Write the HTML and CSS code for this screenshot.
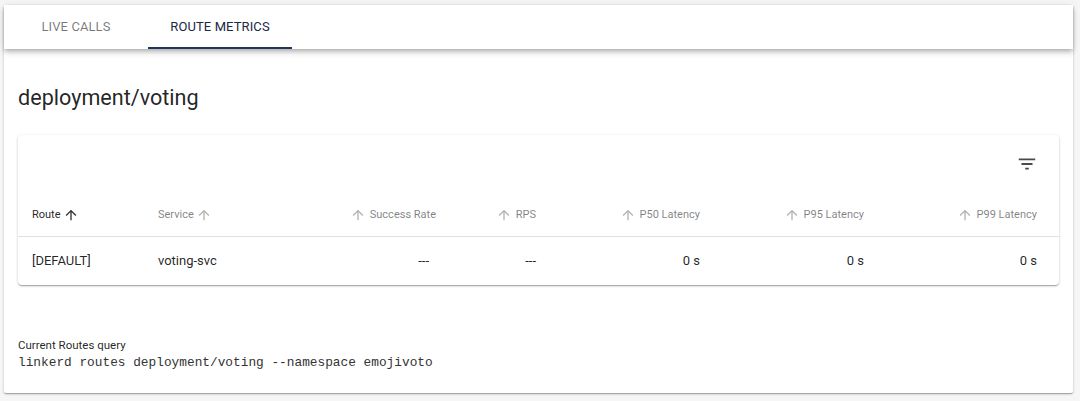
FILE: index.html
```html
<!DOCTYPE html>
<html>
<head>
<meta charset="utf-8">
<link rel="stylesheet" href="styles.css">
</head>
<body>
<div class="panel">
  <div class="tabbar">
    <div class="tab">LIVE CALLS</div>
    <div class="tab tab-active">ROUTE METRICS</div>
  </div>
  <div class="content">
    <h1 class="title">deployment/voting</h1>
    <div class="card">
      <div class="toolbar">
        <svg class="filter-icon" viewBox="0 0 24 24" width="22" height="22"><path d="M10 18h4v-2h-4v2zM3 6v2h18V6H3zm3 7h12v-2H6v2z"/></svg>
      </div>
      <div class="row head">
        <div class="cell c1 active">Route<svg class="arrow after" viewBox="0 0 24 24"><path d="M4 12l1.41 1.41L11 7.83V20h2V7.83l5.58 5.59L20 12l-8-8-8 8z"/></svg></div>
        <div class="cell c2">Service<svg class="arrow after" viewBox="0 0 24 24"><path d="M4 12l1.41 1.41L11 7.83V20h2V7.83l5.58 5.59L20 12l-8-8-8 8z"/></svg></div>
        <div class="cell num c3"><svg class="arrow before" viewBox="0 0 24 24"><path d="M4 12l1.41 1.41L11 7.83V20h2V7.83l5.58 5.59L20 12l-8-8-8 8z"/></svg>Success Rate</div>
        <div class="cell num c4"><svg class="arrow before" viewBox="0 0 24 24"><path d="M4 12l1.41 1.41L11 7.83V20h2V7.83l5.58 5.59L20 12l-8-8-8 8z"/></svg>RPS</div>
        <div class="cell num c5"><svg class="arrow before" viewBox="0 0 24 24"><path d="M4 12l1.41 1.41L11 7.83V20h2V7.83l5.58 5.59L20 12l-8-8-8 8z"/></svg>P50 Latency</div>
        <div class="cell num c6"><svg class="arrow before" viewBox="0 0 24 24"><path d="M4 12l1.41 1.41L11 7.83V20h2V7.83l5.58 5.59L20 12l-8-8-8 8z"/></svg>P95 Latency</div>
        <div class="cell num c7"><svg class="arrow before" viewBox="0 0 24 24"><path d="M4 12l1.41 1.41L11 7.83V20h2V7.83l5.58 5.59L20 12l-8-8-8 8z"/></svg>P99 Latency</div>
      </div>
      <div class="row body">
        <div class="cell c1">[DEFAULT]</div>
        <div class="cell c2">voting-svc</div>
        <div class="cell num c3 dash-sr">---</div>
        <div class="cell num c4">---</div>
        <div class="cell num c5">0 s</div>
        <div class="cell num c6">0 s</div>
        <div class="cell num c7">0 s</div>
      </div>
    </div>
    <div class="query-label">Current Routes query</div>
    <div class="query">linkerd routes deployment/voting --namespace emojivoto</div>
  </div>
</div>
</body>
</html>
```

FILE: styles.css
```css
* { box-sizing: border-box; }
html, body { margin: 0; padding: 0; }
body {
  background: #f6f6f6;
  font-family: Roboto, "Liberation Sans", sans-serif;
  color: rgba(0,0,0,0.87);
  width: 1080px;
  height: 401px;
  overflow: hidden;
}
.panel {
  margin: 5px 7px 0 4px;
  height: 388px;
  background: #fff;
  border-radius: 2px;
  box-shadow: 0 1px 3px rgba(0,0,0,0.2), 0 1px 1px rgba(0,0,0,0.14), 0 2px 1px -1px rgba(0,0,0,0.12);
  display: flex;
  flex-direction: column;
}
.tabbar {
  height: 44px;
  display: flex;
  background: #fff;
  box-shadow: 0 2px 4px -1px rgba(0,0,0,0.2), 0 4px 5px 0 rgba(0,0,0,0.14), 0 1px 10px 0 rgba(0,0,0,0.08);
  position: relative;
  z-index: 1;
}
.tab {
  width: 144px;
  display: flex;
  align-items: center;
  justify-content: center;
  font-size: 13px;
  font-weight: 400;
  letter-spacing: 0.1px;
  color: rgba(0,0,0,0.54);
  border-bottom: 2px solid transparent;
  padding-top: 1px;
}
.tab-active {
  color: #1b2747;
  border-bottom-color: #22345a;
}
.content {
  padding: 0 14px;
  display: flex;
  flex-direction: column;
}
.title {
  margin: 35px 0 0 0;
  font-size: 21.6px;
  font-weight: 400;
  line-height: 28px;
  color: rgba(0,0,0,0.87);
}
.card {
  margin-top: 23px;
  height: 150px;
  background: #fff;
  border-radius: 4px;
  box-shadow: 0 1px 3px rgba(0,0,0,0.2), 0 1px 1px rgba(0,0,0,0.14), 0 2px 1px -1px rgba(0,0,0,0.12);
}
.toolbar {
  height: 57px;
  display: flex;
  justify-content: flex-end;
  align-items: flex-start;
  padding: 18px 21px 0 0;
}
.filter-icon { fill: #4a4a4a; display: block; }
.row {
  display: grid;
  grid-template-columns: 126px 146px 160px 100px 164px 164px 181px;
}
.row.head {
  height: 45px;
  padding-top: 1px;
  border-bottom: 1px solid #e0e0e0;
}
.row.body {
  height: 47px;
}
.cell {
  display: flex;
  align-items: center;
  padding: 0 14px;
  white-space: nowrap;
}
.head .cell {
  font-size: 11px;
  color: rgba(0,0,0,0.5);
}
.head .cell.active { color: rgba(0,0,0,0.87); }
.body .cell { font-size: 13px; color: rgba(0,0,0,0.87); }
.cell.num { justify-content: flex-end; }
.c7 { padding-right: 22px; }
.body .dash-sr { padding-right: 21px; }
.arrow {
  width: 16px;
  height: 16px;
  fill: rgba(0,0,0,0.3);
  flex: none;
}
.active .arrow { fill: rgba(0,0,0,0.8); }
.arrow.after { margin-left: 2px; }
.arrow.before { margin-right: 4px; }
.query-label {
  margin-top: 53px;
  font-size: 11.5px;
  line-height: 14px;
  color: rgba(0,0,0,0.87);
}
.query {
  margin-top: 2px;
  font-family: "Liberation Mono", monospace;
  font-size: 12.8px;
  line-height: 18px;
  color: #333;
}
```
